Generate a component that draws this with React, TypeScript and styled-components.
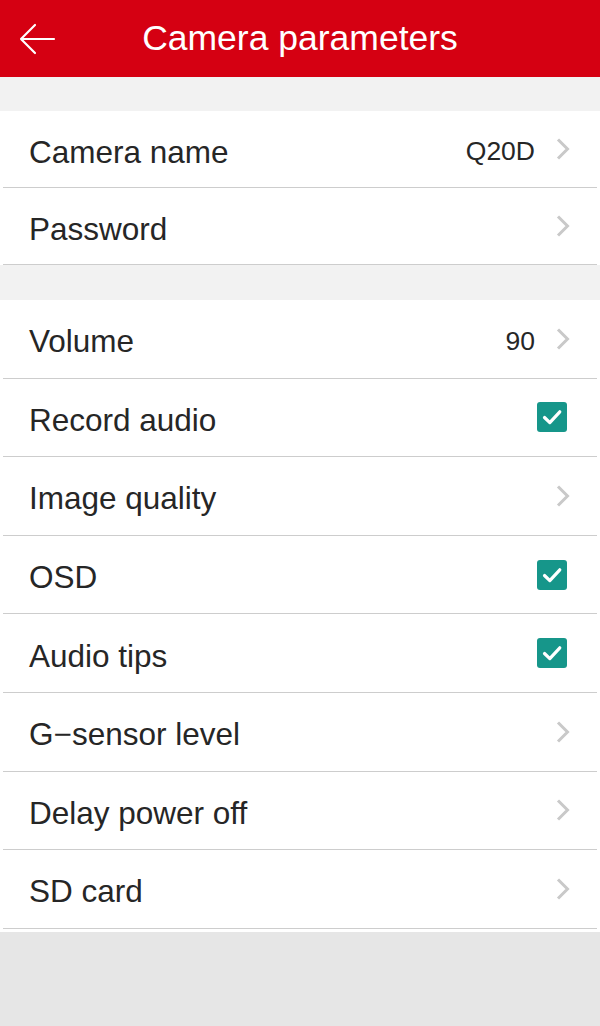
import { createGlobalStyle } from 'styled-components';
import styled from 'styled-components';

const GlobalStyle = createGlobalStyle`
  body {
    margin: 0;
    font-family: "Liberation Sans", Arial, sans-serif;
    background: #e6e6e6;
  }
`;

type Item = {
  label: string;
  value?: string;
  kind: 'link' | 'check';
};

const groups: Item[][] = [
  [
    { label: 'Camera name', value: 'Q20D', kind: 'link' },
    { label: 'Password', kind: 'link' },
  ],
  [
    { label: 'Volume', value: '90', kind: 'link' },
    { label: 'Record audio', kind: 'check' },
    { label: 'Image quality', kind: 'link' },
    { label: 'OSD', kind: 'check' },
    { label: 'Audio tips', kind: 'check' },
    { label: 'G\u2212sensor level', kind: 'link' },
    { label: 'Delay power off', kind: 'link' },
    { label: 'SD card', kind: 'link' },
  ],
];

const Chevron = () => (
  <ChevronIcon viewBox="0 0 16 24" width="16" height="24">
    <path d="M3 2.5 L12.5 12 L3 21.5" fill="none" stroke="#c9c9c9" strokeWidth="3" />
  </ChevronIcon>
);

const Check = () => (
  <CheckBox>
    <svg viewBox="0 0 30 30" width="30" height="30">
      <path
        d="M7.5 15.5 L12.8 20.6 L22.8 9.8"
        fill="none"
        stroke="#fff"
        strokeWidth="3.2"
        strokeLinecap="round"
        strokeLinejoin="round"
      />
    </svg>
  </CheckBox>
);

export default function App() {
  return (
    <>
      <GlobalStyle />
      <Page>
        <Header>
          <BackButton aria-label="back">
            <svg viewBox="0 0 38 32" width="38" height="32">
              <path
                d="M36 16 H3 M17 2 L3 16 L17 30"
                fill="none"
                stroke="#fff"
                strokeWidth="2.2"
                strokeLinecap="round"
                strokeLinejoin="round"
              />
            </svg>
          </BackButton>
          <Title>Camera parameters</Title>
          <span />
        </Header>
        {groups.map((items, gi) => (
          <div key={gi}>
            <Gap $first={gi === 0} />
            <Group $first={gi === 0}>
              {items.map((item) => (
                <Row key={item.label} $tall={gi > 0}>
                  <Label>{item.label}</Label>
                  <Trailing>
                    {item.value && <Value>{item.value}</Value>}
                    {item.kind === 'link' ? <Chevron /> : <Check />}
                  </Trailing>
                </Row>
              ))}
            </Group>
          </div>
        ))}
      </Page>
    </>
  );
}

const Page = styled.div`
  width: 600px;
  min-height: 1026px;
  background: #e6e6e6;
`;

const Header = styled.header`
  height: 77px;
  background: #d50012;
  display: grid;
  grid-template-columns: 1fr auto 1fr;
  align-items: center;
`;

const BackButton = styled.button`
  justify-self: start;
  display: flex;
  margin-left: 18px;
  padding: 0;
  border: 0;
  background: none;
`;

const Title = styled.h1`
  margin: 0;
  color: #fff;
  font-size: 35.5px;
  font-weight: 400;
`;

const Gap = styled.div<{ $first: boolean }>`
  height: ${(p) => (p.$first ? '34px' : '35px')};
  background: #f2f2f2;
`;

const Group = styled.section<{ $first: boolean }>`
  background: #fff;
  padding-bottom: ${(p) => (p.$first ? '0' : '3px')};
`;

const Row = styled.div<{ $tall: boolean }>`
  height: ${(p) => (p.$tall ? '78.6px' : '77px')};
  margin: 0 3px;
  padding: 6px 26px 0 26px;
  box-sizing: border-box;
  display: flex;
  align-items: center;
  justify-content: space-between;
  border-bottom: 1px solid #cdcdcd;
`;

const Label = styled.span`
  color: #262626;
  font-size: 31.5px;
  font-weight: 400;
`;

const Trailing = styled.div`
  display: flex;
  align-items: center;
  gap: 20px;
  margin-top: -6px;
`;

const Value = styled.span`
  color: #262626;
  font-size: 26.5px;
  padding-top: 5px;
`;

const ChevronIcon = styled.svg`
  display: block;
`;

const CheckBox = styled.div`
  width: 30px;
  height: 30px;
  margin-right: 4px;
  border-radius: 3px;
  background: #16968a;
  svg {
    display: block;
  }
`;
